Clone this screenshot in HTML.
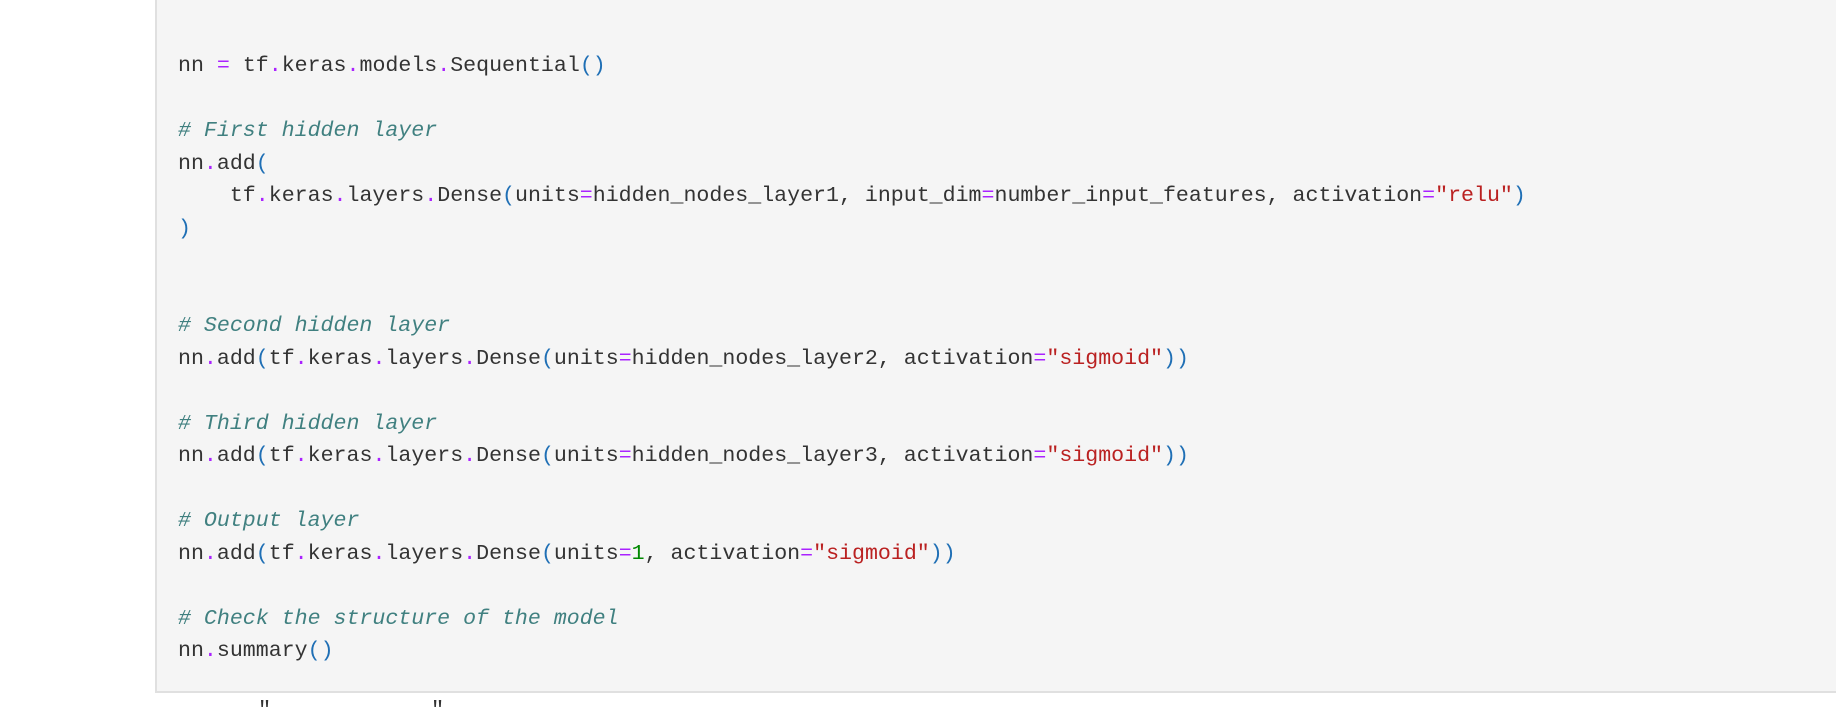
<!DOCTYPE html>
<html><head><meta charset="utf-8"><style>
body{margin:0;width:1836px;height:709px;background:#fff;overflow:hidden;position:relative}
.box{position:absolute;left:155px;top:-2px;width:1700px;height:693px;background:#f5f5f5;border-left:2px solid #e0e0e0;border-bottom:2px solid #e0e0e0}
pre{position:absolute;left:178px;top:50px;margin:0;font-family:"Liberation Mono",monospace;font-size:21.6px;line-height:32.5px;color:#333}
.o{color:#aa22ff}.c{color:#408080;font-style:italic}.s{color:#ba2121}.p{color:#1f6fb5}
.q{position:absolute;top:698px;font-family:"Liberation Mono",monospace;font-size:22px;color:#333}
</style></head><body>
<div class="box"></div>
<pre>nn <span class="o">=</span> tf<span class="o">.</span>keras<span class="o">.</span>models<span class="o">.</span>Sequential<span class="p">()</span>

<span class="c"># First hidden layer</span>
nn<span class="o">.</span>add<span class="p">(</span>
    tf<span class="o">.</span>keras<span class="o">.</span>layers<span class="o">.</span>Dense<span class="p">(</span>units<span class="o">=</span>hidden_nodes_layer1, input_dim<span class="o">=</span>number_input_features, activation<span class="o">=</span><span class="s">"relu"</span><span class="p">)</span>
<span class="p">)</span>


<span class="c"># Second hidden layer</span>
nn<span class="o">.</span>add<span class="p">(</span>tf<span class="o">.</span>keras<span class="o">.</span>layers<span class="o">.</span>Dense<span class="p">(</span>units<span class="o">=</span>hidden_nodes_layer2, activation<span class="o">=</span><span class="s">"sigmoid"</span><span class="p">))</span>

<span class="c"># Third hidden layer</span>
nn<span class="o">.</span>add<span class="p">(</span>tf<span class="o">.</span>keras<span class="o">.</span>layers<span class="o">.</span>Dense<span class="p">(</span>units<span class="o">=</span>hidden_nodes_layer3, activation<span class="o">=</span><span class="s">"sigmoid"</span><span class="p">))</span>

<span class="c"># Output layer</span>
nn<span class="o">.</span>add<span class="p">(</span>tf<span class="o">.</span>keras<span class="o">.</span>layers<span class="o">.</span>Dense<span class="p">(</span>units<span class="o">=</span><span style="color:#080">1</span>, activation<span class="o">=</span><span class="s">"sigmoid"</span><span class="p">))</span>

<span class="c"># Check the structure of the model</span>
nn<span class="o">.</span>summary<span class="p">()</span></pre>
<div class="q" style="left:258px">"</div>
<div class="q" style="left:431px">"</div>
</body></html>
